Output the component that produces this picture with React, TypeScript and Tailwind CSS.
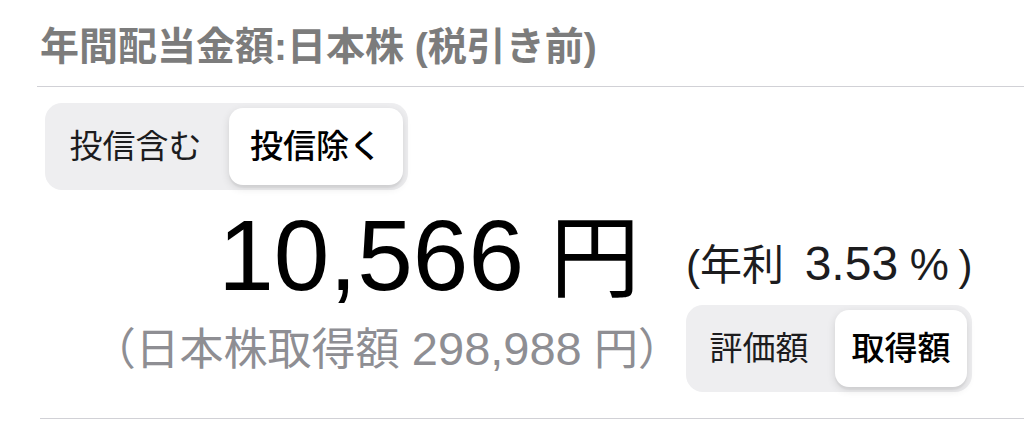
const font = { fontFamily: '"Liberation Sans", "Noto Sans CJK JP", sans-serif' };

function Segmented({ options, selected, width, selWidth }: { options: string[]; selected: number; width: string; selWidth: string }) {
  return (
    <div className={`flex h-[87px] rounded-[17px] bg-[#eeeef0] p-[5px] ${width}`}>
      {options.map((o, i) =>
        i === selected ? (
          <div
            key={o}
            className={`flex items-center justify-center rounded-[14px] bg-white text-[33px] font-medium text-black shadow-[0_3px_8px_rgba(0,0,0,0.12),0_3px_1px_rgba(0,0,0,0.04)] ${selWidth}`}
          >
            {o}
          </div>
        ) : (
          <div key={o} className="flex flex-1 items-center justify-center pr-[8px] text-[33px] text-[#1c1c1e]">
            {o}
          </div>
        )
      )}
    </div>
  );
}

export default function App() {
  return (
    <div className="h-[425px] w-[1024px] overflow-hidden bg-white" style={font}>
      <div className="h-[86px] pl-[40px] pt-[24px] text-[39px] font-bold leading-[46px] text-[#7c7c7c]">
        年間配当金額:日本株 (税引き前)
      </div>
      <div className="ml-[37px] border-t border-[#d1d1d6]" />
      <div className="ml-[45px] mt-[16px]">
        <Segmented options={["投信含む", "投信除く"]} selected={1} width="w-[363px]" selWidth="w-[174px]" />
      </div>
      <div className="mt-[11px] grid grid-cols-[662px_auto] gap-x-[24px]">
        <div className="pr-[22px] pt-[4px] text-right text-[100px] leading-none text-black">
          10,566<span className="ml-[26px] text-[90px]">円</span>
        </div>
        <div className="mb-[17px] self-end whitespace-nowrap text-[42px] leading-none text-[#1c1c1e]">
          (年利 <span className="ml-[9px] text-[48px]">3.53</span> <span className="text-[44px]">%</span> <span className="-ml-[2px]">)</span>
        </div>
        <div className="-mr-[20px] self-center text-right text-[44px] leading-none text-[#8e8e93]">
          （日本株取得額 <span className="text-[47px]">298,988</span> 円）
        </div>
        <div>
          <Segmented options={["評価額", "取得額"]} selected={1} width="w-[286px]" selWidth="w-[132px]" />
        </div>
      </div>
      <div className="ml-[40px] mt-[26px] border-t border-[#d1d1d6]" />
    </div>
  );
}
